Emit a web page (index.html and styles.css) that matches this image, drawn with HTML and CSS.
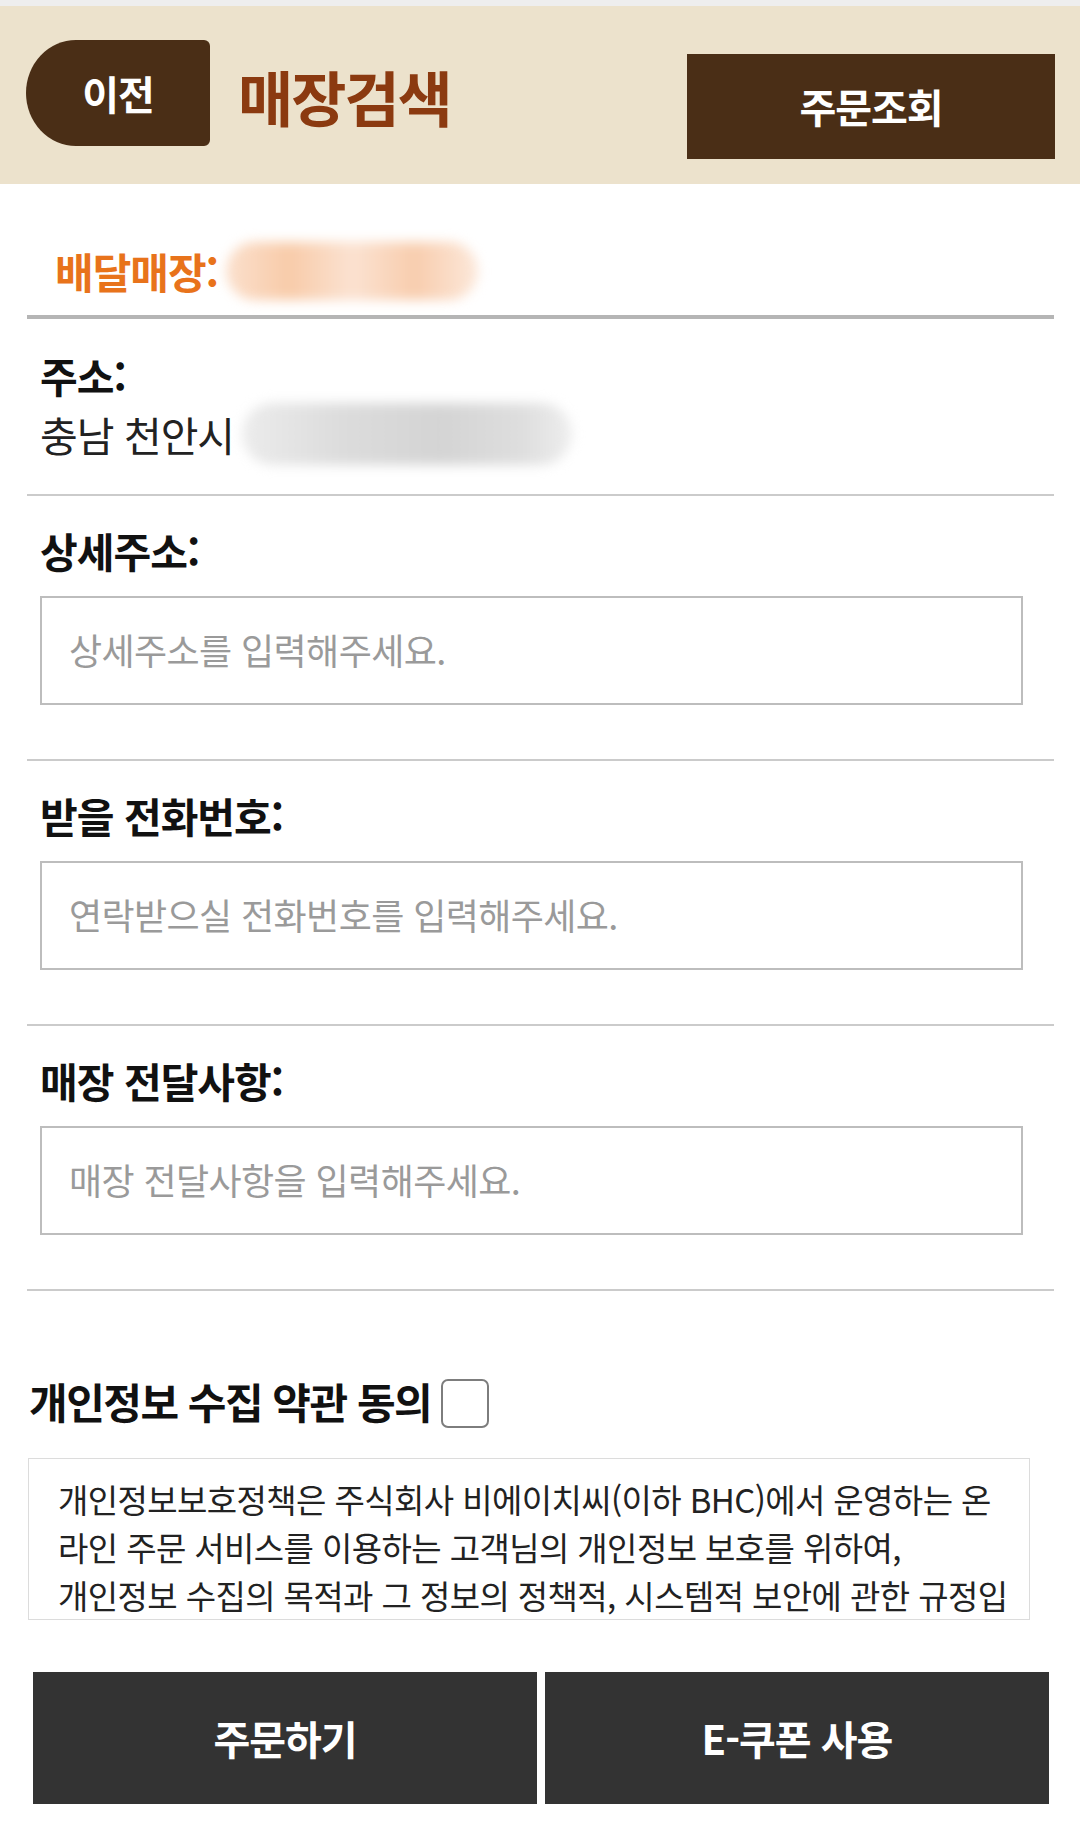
FILE: index.html
```html
<!DOCTYPE html>
<html lang="ko">
<head>
  <meta charset="UTF-8">
  <meta name="viewport" content="width=device-width, initial-scale=1.0">
  <title>매장검색</title>
  <link rel="stylesheet" href="styles.css">
</head>
<body>

  <div class="top-bar">
    <button class="back-btn">이전</button>
    <h1 class="page-title">매장검색</h1>
    <button class="order-check">주문조회</button>
  </div>

  <div class="form-wrap">
    <div class="store-row">
      <span class="store-label">배달매장:</span>
      <span class="blur-box store-blur"></span>
    </div>

    <div class="address-block">
      <div class="field-label">주소:</div>
      <div class="address-text">충남 천안시<span class="blur-box address-blur"></span></div>
    </div>

    <div class="field-section">
      <label class="field-label" for="detailAddr">상세주소:</label>
      <input type="text" id="detailAddr" class="field-input" placeholder="상세주소를 입력해주세요.">
    </div>

    <div class="field-section">
      <label class="field-label" for="phone">받을 전화번호:</label>
      <input type="text" id="phone" class="field-input" placeholder="연락받으실 전화번호를 입력해주세요.">
    </div>

    <div class="field-section">
      <label class="field-label" for="memo">매장 전달사항:</label>
      <input type="text" id="memo" class="field-input" placeholder="매장 전달사항을 입력해주세요.">
    </div>

    <div class="agree-section">
      <div class="agree-title">
        <label for="agree">개인정보 수집 약관 동의</label>
        <input type="checkbox" id="agree" class="agree-check">
      </div>
      <div class="terms-box">
        <p>개인정보보호정책은 주식회사 비에이치씨(이하 BHC)에서 운영하는 온<br>라인 주문 서비스를 이용하는 고객님의 개인정보 보호를 위하여,<br>개인정보 수집의 목적과 그 정보의 정책적, 시스템적 보안에 관한 규정입<br>니다.</p>
      </div>
    </div>
  </div>

  <div class="bottom-actions">
    <button class="action-btn">주문하기</button>
    <button class="action-btn">E-쿠폰 사용</button>
  </div>

</body>
</html>
```

FILE: styles.css
```css
body {
  font-family: "Noto Sans CJK KR", "Noto Sans", sans-serif;
  margin: 0;
  padding: 0;
  background-color: #fff;
  color: #111;
}

button {
  font-family: inherit;
  border: none;
  cursor: pointer;
}

.top-bar {
  border-top: 6px solid #eeeeee;
  background-color: #ece2cc;
  height: 178px;
  display: flex;
  align-items: center;
  padding: 0 25px 0 26px;
}

.back-btn {
  width: 184px;
  height: 106px;
  margin-top: -4px;
  background-color: #4a2e16;
  color: #fff;
  border-radius: 50px 6px 6px 50px / 53px 6px 6px 53px;
  font-size: 40px;
  font-weight: 700;
  letter-spacing: -1px;
}

.page-title {
  margin: 0 0 0 28px;
  font-size: 60px;
  font-weight: 700;
  color: #8b3a10;
  letter-spacing: -2px;
}

.order-check {
  margin-left: auto;
  margin-top: 22px;
  width: 368px;
  height: 105px;
  background-color: #4a2e16;
  color: #fff;
  font-size: 40px;
  font-weight: 700;
  letter-spacing: -1px;
}

.form-wrap {
  padding: 0 26px 0 27px;
}

.store-row {
  display: flex;
  align-items: center;
  padding: 61px 0 18px 28px;
  border-bottom: 4px solid #b5b5b5;
}

.store-label {
  font-size: 42px;
  font-weight: 700;
  line-height: 52px;
  color: #e8731b;
  letter-spacing: -1px;
}

.blur-box {
  display: inline-block;
  filter: blur(6px);
}

.store-blur {
  width: 252px;
  height: 58px;
  margin: -4px 0 -4px 8px;
  border-radius: 29px;
  background: linear-gradient(90deg, #fbe0cd, #f8cba9 25%, #fbe2d1 50%, #f8cdae 75%, #fce8da);
}

.address-block {
  padding: 31px 0 33px 13px;
}

.field-label {
  display: block;
  font-size: 41px;
  font-weight: 700;
  line-height: 50px;
  letter-spacing: -1px;
}

.address-text {
  display: flex;
  align-items: center;
  margin-top: 7px;
  font-size: 41px;
  line-height: 54px;
  color: #222;
  letter-spacing: -1px;
}

.address-blur {
  width: 330px;
  height: 62px;
  margin: -8px 0 -8px 8px;
  border-radius: 31px;
  background: linear-gradient(90deg, #ececec, #dcdcdc 30%, #d4d4d4 60%, #dedede 85%, #eeeeee);
}

.field-section {
  border-top: 2px solid #cbcbcb;
  padding: 29px 0 54px 13px;
}

.field-input {
  display: block;
  box-sizing: border-box;
  width: 983px;
  height: 109px;
  margin: 21px 0 0 0;
  padding: 0 0 4px 27px;
  border: 2px solid #bdbdbd;
  font-family: inherit;
  font-size: 36px;
  letter-spacing: -0.6px;
  color: #333;
}

.field-input::placeholder {
  color: #9a9a9a;
}

.agree-section {
  border-top: 2px solid #cbcbcb;
  padding-top: 82px;
}

.agree-title {
  display: flex;
  align-items: center;
  padding-left: 2px;
  font-size: 42px;
  font-weight: 700;
  line-height: 50px;
  letter-spacing: -1.5px;
}

.agree-check {
  appearance: none;
  -webkit-appearance: none;
  width: 48px;
  height: 49px;
  margin: 6px 0 0 10px;
  border: 2px solid #7d7d7d;
  border-radius: 7px;
  background: #fff;
}

.terms-box {
  box-sizing: border-box;
  width: 1002px;
  height: 162px;
  margin: 30px 0 0 1px;
  padding: 16px 0 0 29px;
  border: 1px solid #dcdcdc;
  overflow: hidden;
}

.terms-box p {
  margin: 0;
  font-size: 33px;
  line-height: 48px;
  color: #222;
  letter-spacing: -0.6px;
  white-space: nowrap;
}

.bottom-actions {
  display: flex;
  gap: 8px;
  margin-top: 52px;
  padding: 0 31px 0 33px;
}

.action-btn {
  flex: 1;
  height: 132px;
  background-color: #333333;
  color: #fff;
  font-size: 40px;
  font-weight: 700;
  letter-spacing: -1px;
  box-shadow: 0 1px 0 #c8c8c8;
}
```
